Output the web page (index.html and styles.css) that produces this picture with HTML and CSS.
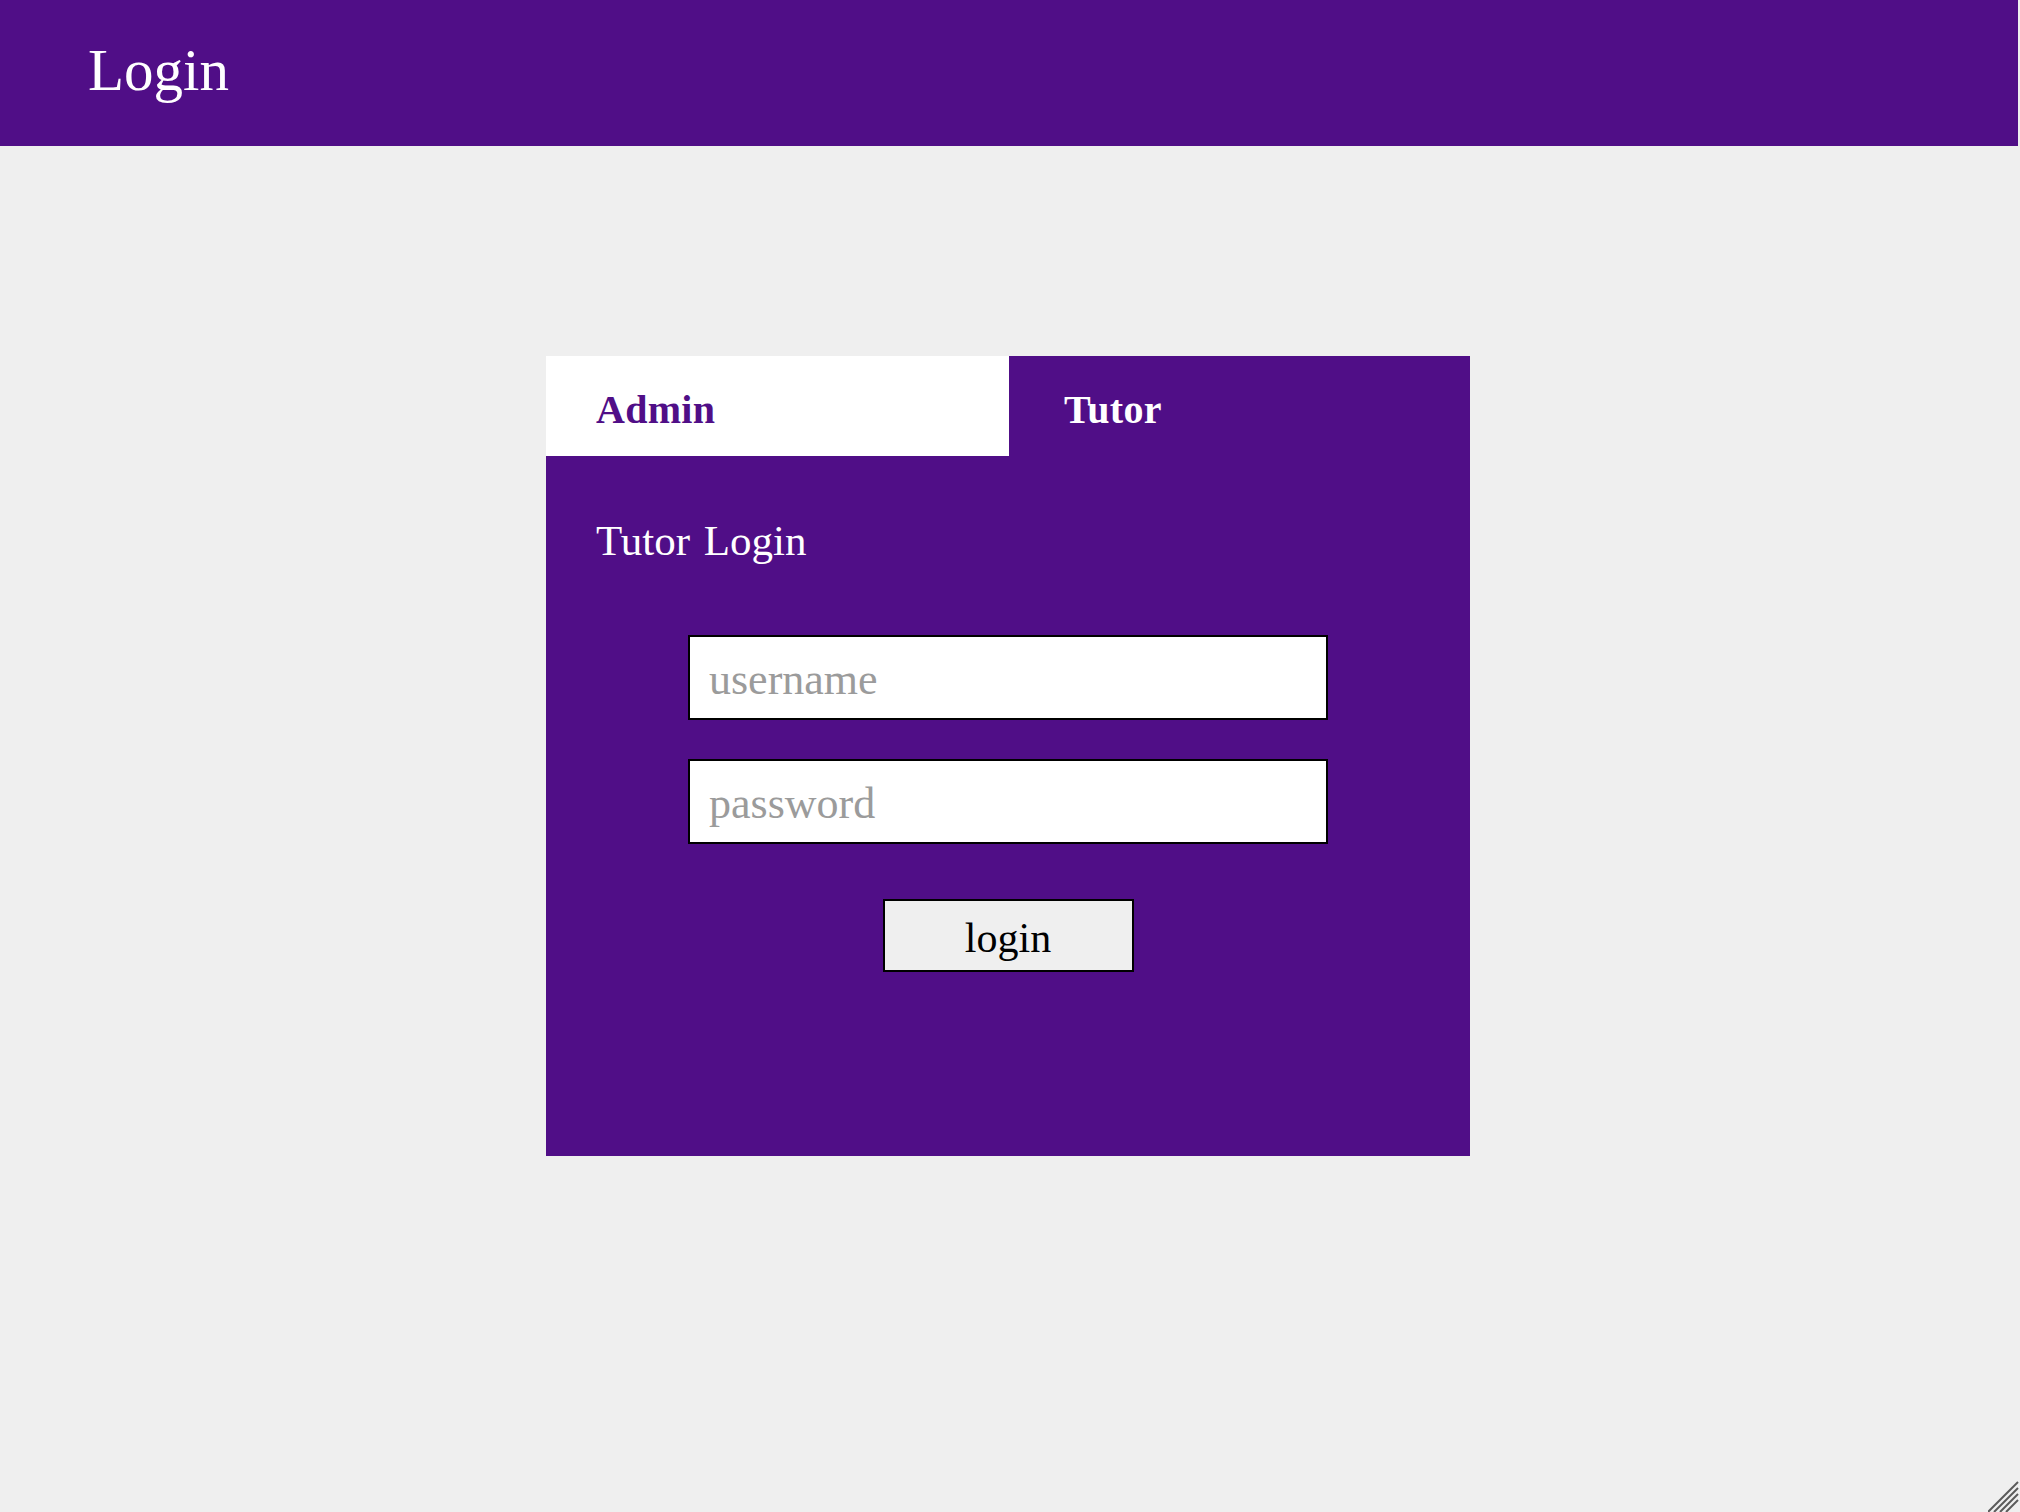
FILE: index.html
```html
<!DOCTYPE html>
<html lang="en">
<head>
<meta charset="utf-8">
<title>Login</title>
<link rel="stylesheet" href="styles.css">
</head>
<body>
<header class="topbar">
  <h1 class="topbar-title">Login</h1>
</header>
<main class="card">
  <nav class="tabs">
    <a class="tab tab-admin" href="#">Admin</a>
    <a class="tab tab-tutor" href="#">Tutor</a>
  </nav>
  <section class="panel">
    <h2 class="panel-title">Tutor Login</h2>
    <form class="form">
      <input class="field" type="text" placeholder="username">
      <input class="field" type="password" placeholder="password">
      <button class="btn" type="button">login</button>
    </form>
  </section>
</main>
<svg class="grip" width="32" height="32" viewBox="0 0 32 32">
  <line x1="0" y1="32" x2="30" y2="2" />
  <line x1="6" y1="32" x2="30" y2="8" />
  <line x1="12" y1="32" x2="30" y2="14" />
  <line x1="18" y1="32" x2="30" y2="20" />
</svg>
</body>
</html>
```

FILE: styles.css
```css
html, body {
  margin: 0;
  padding: 0;
}
body {
  background: #efefef;
  font-family: "Liberation Serif", "Times New Roman", serif;
  min-height: 1512px;
  overflow: hidden;
}
.topbar {
  background: #500e87;
  height: 146px;
  box-sizing: border-box;
  padding: 36px 0 0 88px;
  width: 2018px;
}
.topbar-title {
  margin: 0;
  color: #ffffff;
  font-size: 59px;
  font-weight: normal;
  line-height: normal;
}
.card {
  display: block;
  width: 924px;
  height: 800px;
  margin: 210px 0 0 546px;
  background: #500e87;
}
.tabs {
  display: flex;
  height: 100px;
}
.tab {
  box-sizing: border-box;
  padding-top: 30px;
  font-size: 40px;
  font-weight: bold;
  line-height: normal;
  text-decoration: none;
  letter-spacing: 0.3px;
}
.tab-admin {
  width: 463px;
  background: #ffffff;
  color: #500e87;
  padding-left: 50px;
}
.tab-tutor {
  flex: 1;
  background: #500e87;
  color: #ffffff;
  padding-left: 55px;
}
.panel {
  padding: 60px 0 0 50px;
}
.panel-title {
  margin: 0;
  color: #ffffff;
  font-size: 43px;
  font-weight: normal;
  line-height: normal;
  word-spacing: 3px;
}
.form {
  display: flex;
  flex-direction: column;
  align-items: center;
  margin: 70px 0 0 -50px;
}
.field {
  box-sizing: border-box;
  width: 640px;
  height: 85px;
  margin: 0 0 39px 0;
  padding: 4px 0 0 19px;
  border: 2px solid #000000;
  background: #ffffff;
  font-family: "Liberation Serif", "Times New Roman", serif;
  font-size: 44px;
  color: #000;
  outline: none;
}
.field::placeholder {
  color: #9b9b9b;
  opacity: 1;
}
.btn {
  box-sizing: border-box;
  width: 251px;
  height: 73px;
  margin-top: 16px;
  border: 2px solid #000000;
  background: #efefef;
  font-family: "Liberation Serif", "Times New Roman", serif;
  font-size: 42px;
  color: #000000;
  padding: 4px 0 0 0;
}
.grip {
  position: absolute;
  right: 0;
  bottom: 0;
}
.grip line {
  stroke: #5a5a5a;
  stroke-width: 2;
}
```
